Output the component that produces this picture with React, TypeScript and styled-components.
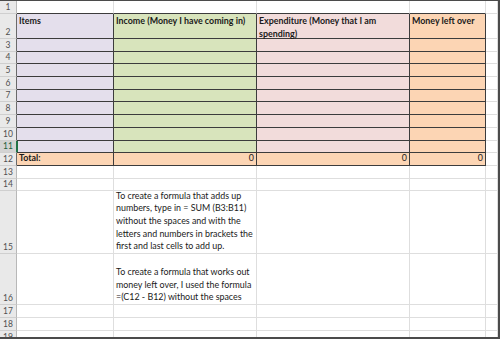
import React from 'react';
import styled, { createGlobalStyle } from 'styled-components';

const GlobalStyle = createGlobalStyle`
  html, body {
    margin: 0;
    padding: 0;
    background: #ffffff;
  }
  * {
    box-sizing: border-box;
  }
`;

const DARK = '#3c3c3c';
const GRID = '#dedede';

const FILLS: Record<string, string> = {
  A: '#e4dfec',
  B: '#d8e4bc',
  C: '#f2dcdb',
  D: '#fcd5b4',
};

type CellSpec = {
  text?: string;
  bold?: boolean;
  right?: boolean;
  top?: boolean;
};

type RowSpec = {
  n: number;
  h: number;
  kind: 'plain' | 'head' | 'body' | 'total' | 'above';
  active?: boolean;
  cells?: Partial<Record<string, CellSpec>>;
};

const note1 =
  'To create a formula that adds up\nnumbers, type in = SUM (B3:B11)\nwithout the spaces and with the\nletters and numbers in brackets the\nfirst and last cells to add up.';
const note2 =
  'To create a formula that works out\nmoney left over, I used the formula\n=(C12 - B12) without the spaces';

const rows: RowSpec[] = [
  { n: 1, h: 13, kind: 'above' },
  {
    n: 2,
    h: 25,
    kind: 'head',
    cells: {
      A: { text: 'Items', bold: true, top: true },
      B: { text: 'Income (Money I have coming in)', bold: true, top: true },
      C: { text: 'Expenditure (Money that I am\nspending)', bold: true, top: true },
      D: { text: 'Money left over', bold: true, top: true },
    },
  },
  ...[3, 4, 5, 6, 7, 8, 9, 10, 11].map(
    (n): RowSpec => ({ n, h: 12.7, kind: 'body', active: n === 11 })
  ),
  {
    n: 12,
    h: 12.7,
    kind: 'total',
    cells: {
      A: { text: 'Total:', bold: true },
      B: { text: '0', right: true },
      C: { text: '0', right: true },
      D: { text: '0', right: true },
    },
  },
  { n: 13, h: 12.7, kind: 'plain' },
  { n: 14, h: 12.3, kind: 'plain' },
  { n: 15, h: 63, kind: 'plain', cells: { B: { text: note1 } } },
  { n: 16, h: 51, kind: 'plain', cells: { B: { text: note2 } } },
  { n: 17, h: 13, kind: 'plain' },
  { n: 18, h: 13, kind: 'plain' },
  { n: 19, h: 13, kind: 'plain' },
];

function App() {
  return (
    <>
      <GlobalStyle />
      <Frame>
        <Sheet>
          {rows.map((row) => {
            const inTable = row.kind === 'head' || row.kind === 'body' || row.kind === 'total';
            return (
              <Row key={row.n} style={{ height: row.h }}>
                <RowHead $active={row.active} $table={inTable}>
                  {row.n}
                </RowHead>
                {['A', 'B', 'C', 'D', 'E'].map((col) => {
                  const spec = row.cells?.[col];
                  const tableCol = col !== 'E';
                  let fill = '#ffffff';
                  if (inTable && tableCol) fill = row.kind === 'total' ? FILLS.D : FILLS[col];
                  const darkBottom = tableCol && (inTable || row.kind === 'above');
                  const darkRight = tableCol && inTable;
                  return (
                    <Cell
                      key={col}
                      $fill={fill}
                      $darkBottom={darkBottom}
                      $darkRight={darkRight}
                      $top={spec?.top}
                      $right={spec?.right}
                      $bold={spec?.bold}
                      $active={row.active && col === 'A'}
                    >
                      {spec?.text}
                    </Cell>
                  );
                })}
              </Row>
            );
          })}
        </Sheet>
      </Frame>
    </>
  );
}

export default App;

const Frame = styled.div`
  width: 500px;
  height: 339px;
  overflow: hidden;
  border-top: 1px solid #4b4b4b;
  border-right: 2px solid #4b4b4b;
  border-bottom: 2px solid #4b4b4b;
  background: #ffffff;
`;

const Sheet = styled.div`
  display: flex;
  flex-direction: column;
  font-family: Lato, 'Liberation Sans', sans-serif;
  font-size: 8.9px;
  color: #1a1a1a;
`;

const Row = styled.div`
  display: grid;
  grid-template-columns: 17px 97px 143px 153px 76px 1fr;
  grid-template-rows: 100%;
  flex-shrink: 0;
`;

const RowHead = styled.div<{ $active?: boolean; $table?: boolean }>`
  display: flex;
  align-items: flex-end;
  justify-content: center;
  padding-bottom: 1px;
  background: ${(p) => (p.$active ? '#d3d3d3' : '#e9e9e9')};
  color: ${(p) => (p.$active ? '#1e5f3a' : '#505050')};
  font-size: 8.5px;
  line-height: 10px;
  border-bottom: 1px solid #cfcfcf;
  border-right: 1px solid ${(p) => (p.$active ? '#217346' : p.$table ? '#6a6a6a' : '#b8b8b8')};
`;

const Cell = styled.div<{
  $fill: string;
  $darkBottom?: boolean;
  $darkRight?: boolean;
  $top?: boolean;
  $right?: boolean;
  $bold?: boolean;
  $active?: boolean;
}>`
  display: flex;
  flex-direction: column;
  justify-content: ${(p) => (p.$top ? 'flex-start' : 'flex-end')};
  align-items: ${(p) => (p.$right ? 'flex-end' : 'flex-start')};
  padding: ${(p) => (p.$top ? '1px 2px 0 2px' : '0 2px 0 2px')};
  background: ${(p) => p.$fill};
  border-right: 1px solid ${(p) => (p.$darkRight ? DARK : GRID)};
  border-bottom: 1px solid ${(p) => (p.$darkBottom ? DARK : GRID)};
  box-shadow: ${(p) => (p.$active ? 'inset 1px 0 0 #217346' : 'none')};
  font-weight: ${(p) => (p.$bold ? 700 : 400)};
  line-height: 12.6px;
  white-space: pre;
  overflow: visible;
  min-width: 0;
`;
